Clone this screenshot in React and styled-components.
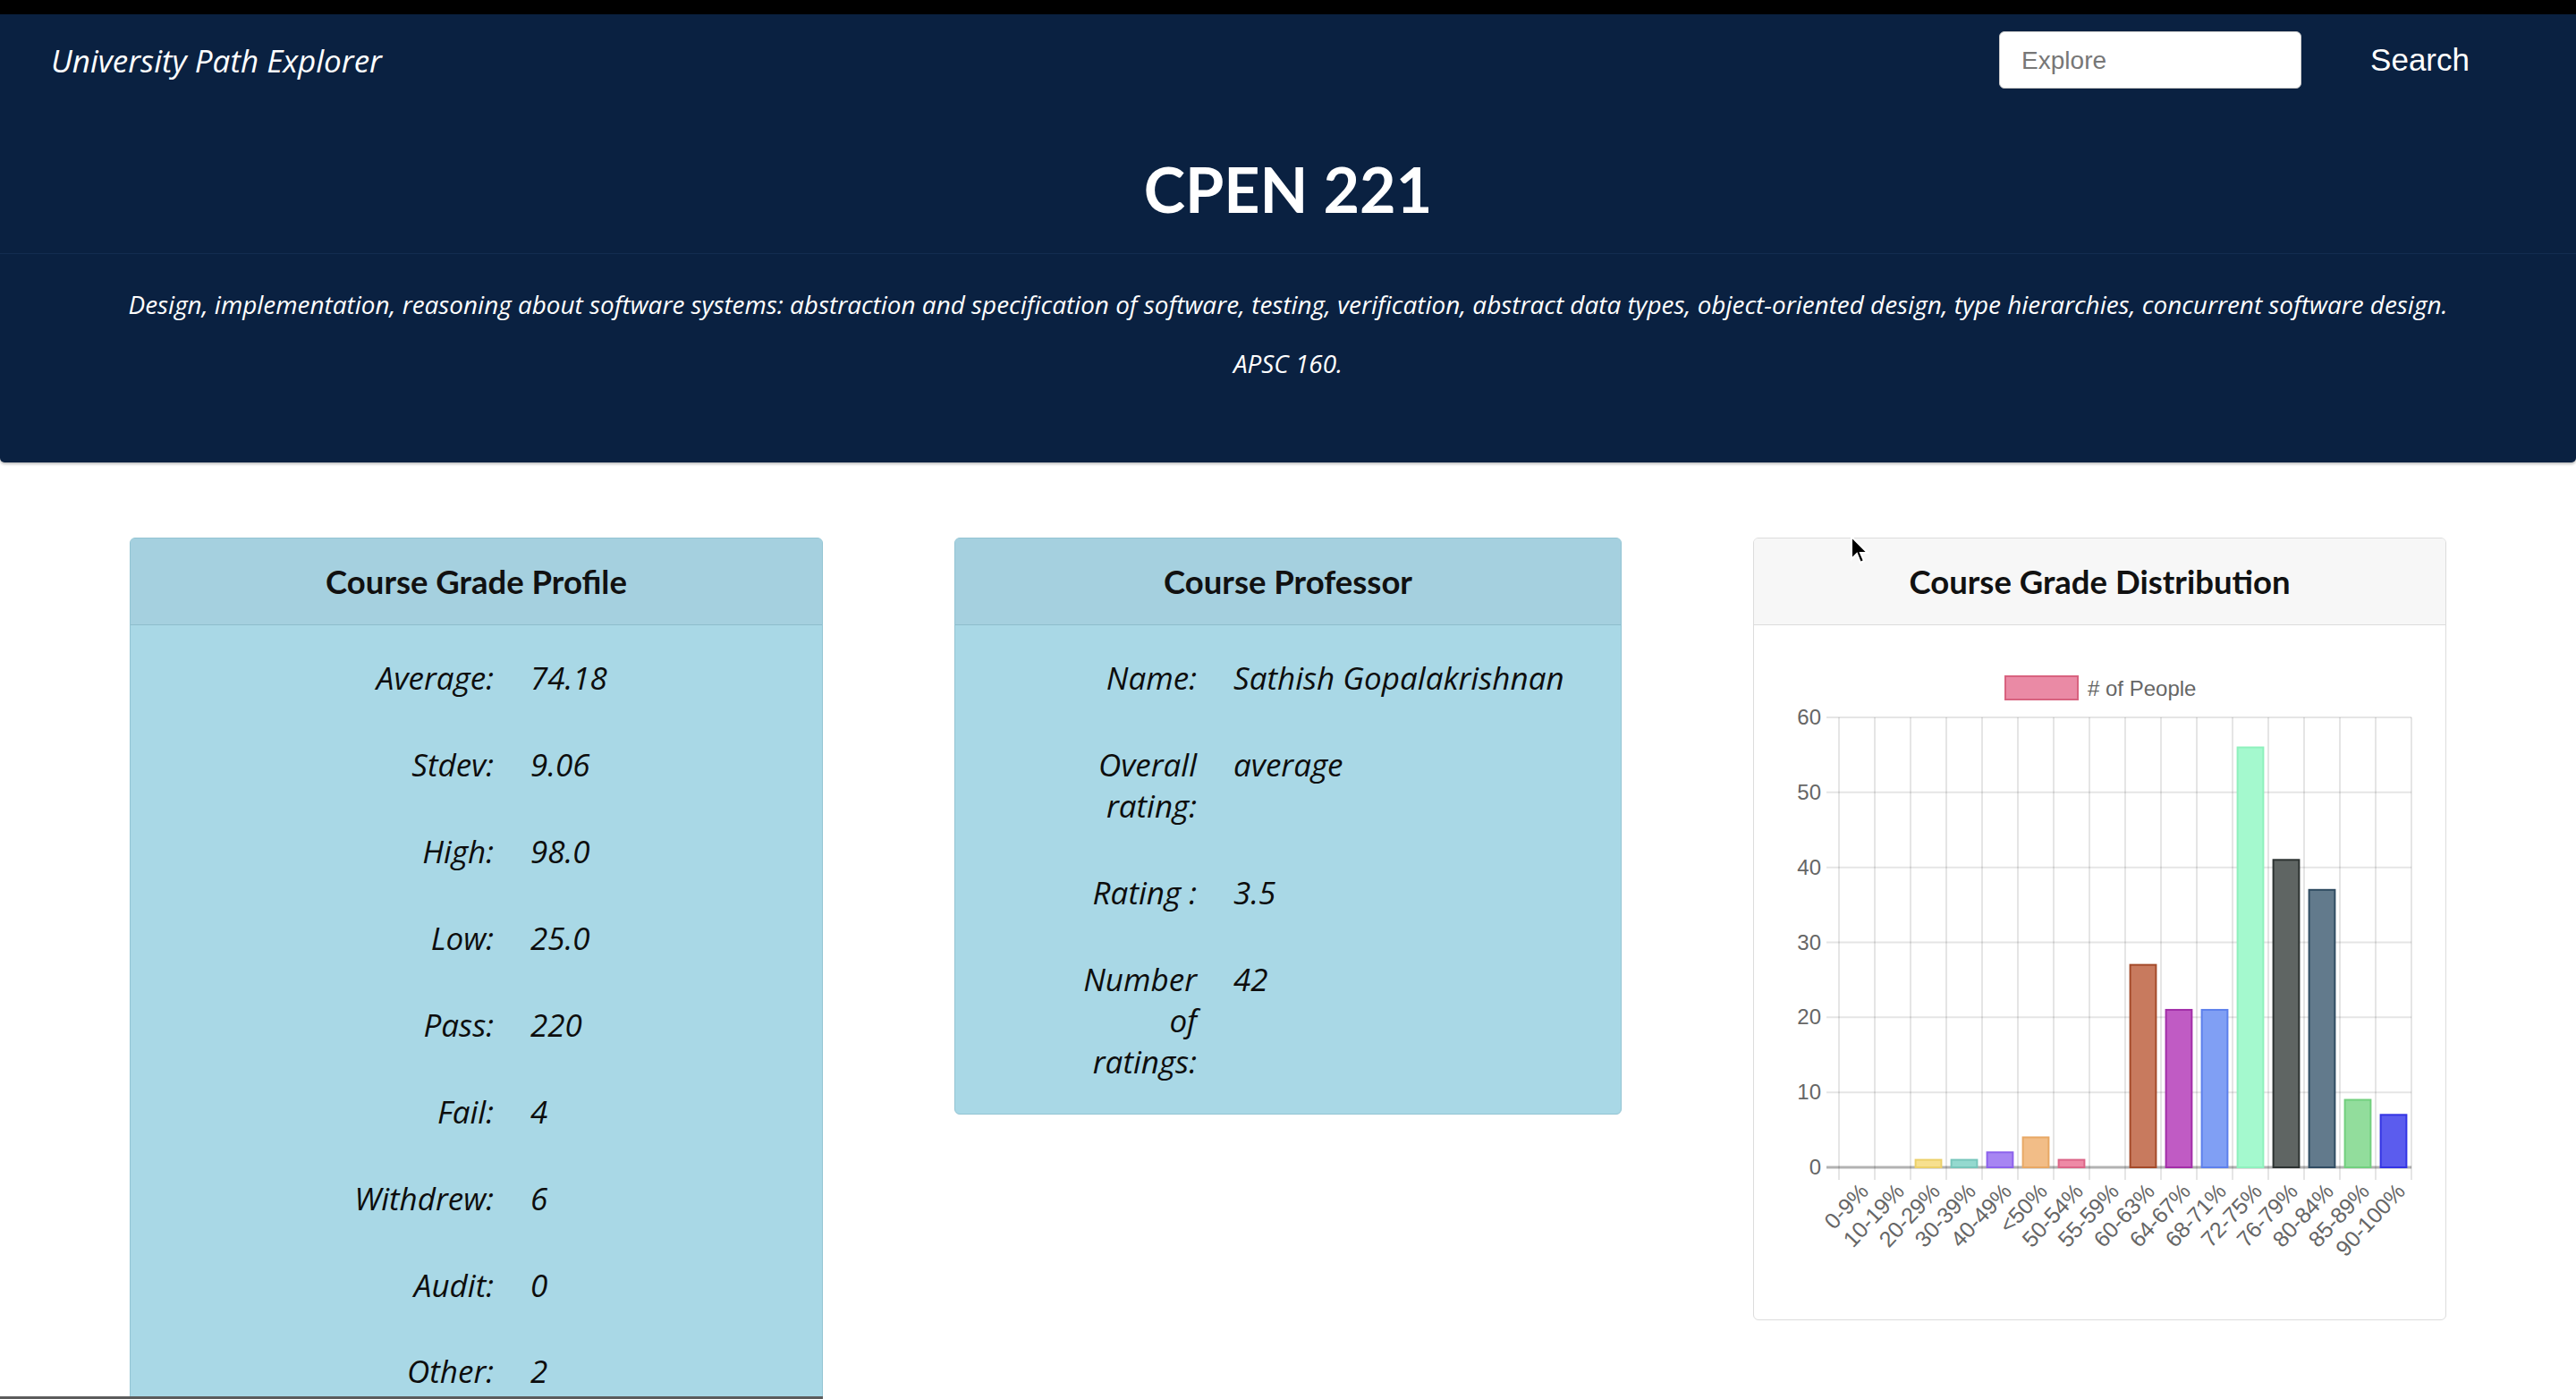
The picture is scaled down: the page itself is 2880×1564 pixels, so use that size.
import React from 'react'
import styled, { createGlobalStyle } from 'styled-components'

const GlobalStyle = createGlobalStyle`
  html, body {
    margin: 0;
    padding: 0;
    background: #fff;
  }
  body {
    font-family: "Open Sans", "Liberation Sans", sans-serif;
    overflow: hidden;
  }
  * { box-sizing: border-box; }
`

const profile = [
  ['Average:', '74.18'],
  ['Stdev:', '9.06'],
  ['High:', '98.0'],
  ['Low:', '25.0'],
  ['Pass:', '220'],
  ['Fail:', '4'],
  ['Withdrew:', '6'],
  ['Audit:', '0'],
  ['Other:', '2'],
]

const professor = [
  ['Name:', 'Sathish Gopalakrishnan'],
  ['Overall rating:', 'average'],
  ['Rating :', '3.5'],
  ['Number of ratings:', '42'],
]

const grades = [
  { label: '0-9%', value: 0, fill: '#f4a0b5', stroke: '#e07090' },
  { label: '10-19%', value: 0, fill: '#f4a0b5', stroke: '#e07090' },
  { label: '20-29%', value: 1, fill: '#f7e08f', stroke: '#ecd06a' },
  { label: '30-39%', value: 1, fill: '#94d9cf', stroke: '#78c6bb' },
  { label: '40-49%', value: 2, fill: '#a785f2', stroke: '#8c62ec' },
  { label: '<50%', value: 4, fill: '#f2bd87', stroke: '#e8a865' },
  { label: '50-54%', value: 1, fill: '#ee8aa6', stroke: '#dc6688' },
  { label: '55-59%', value: 0, fill: '#ccc', stroke: '#aaa' },
  { label: '60-63%', value: 27, fill: '#c87a5e', stroke: '#a44a2a' },
  { label: '64-67%', value: 21, fill: '#c05bc4', stroke: '#a22ea8' },
  { label: '68-71%', value: 21, fill: '#809ff4', stroke: '#5d80ec' },
  { label: '72-75%', value: 56, fill: '#a4f9ce', stroke: '#8ff1bd' },
  { label: '76-79%', value: 41, fill: '#5f6563', stroke: '#2c3231' },
  { label: '80-84%', value: 37, fill: '#627a8c', stroke: '#304c62' },
  { label: '85-89%', value: 9, fill: '#92dd9c', stroke: '#72cf7e' },
  { label: '90-100%', value: 7, fill: '#5b5cee', stroke: '#3334e4' },
]

const Page = styled.div`
  position: relative;
  min-height: 1564px;
`

const TopStrip = styled.div`
  height: 16px;
  background: #000;
`

const Hero = styled.header`
  background: #0a2141;
  color: #fff;
  border-radius: 0 0 5px 5px;
  box-shadow: 0 2px 3px rgba(0, 0, 0, 0.25);
`

const NavBar = styled.nav`
  height: 102px;
  display: flex;
  align-items: center;
  justify-content: space-between;
  padding: 0 119px 0 57px;
`

const Brand = styled.span`
  font-family: "Open Sans", sans-serif;
  font-style: italic;
  font-size: 35px;
  color: #fff;
`

const SearchForm = styled.form`
  display: flex;
  align-items: center;
  gap: 77px;
`

const SearchInput = styled.input`
  width: 338px;
  height: 64px;
  border: 1px solid #ccc;
  border-radius: 6px;
  padding: 2px 24px 0;
  font-family: "Liberation Sans", Arial, sans-serif;
  font-size: 28px;
  color: #333;
  background: #fff;
  outline: none;
  &::placeholder { color: #777; }
`

const SearchButton = styled.button`
  border: none;
  background: none;
  padding: 0;
  color: #fff;
  font-family: "Liberation Sans", Arial, sans-serif;
  font-size: 35px;
  cursor: pointer;
`

const TitleBlock = styled.div`
  padding: 50px 0 29px;
  border-bottom: 1px solid #132c50;
  text-align: center;
`

const CourseCode = styled.h1`
  margin: 0;
  font-family: Lato, "Open Sans", sans-serif;
  font-weight: 700;
  font-size: 70px;
  line-height: 86px;
`

const Description = styled.div`
  padding: 36px 40px 91px;
  text-align: center;
  font-style: italic;
  font-size: 27.9px;
  line-height: 40px;

  p {
    margin: 0;
  }
  p + p {
    margin-top: 26px;
  }
`

const CardRow = styled.main`
  display: grid;
  grid-template-columns: 775px 746px 775px;
  justify-content: space-between;
  align-items: start;
  padding: 84px 145px 0;
`

const Card = styled.section`
  border: 1px solid ${p => (p.$tone === 'blue' ? '#93c4d3' : '#dcdcdc')};
  border-radius: 6px;
  background: ${p => (p.$tone === 'blue' ? '#a9d8e6' : '#fff')};
  overflow: hidden;
`

const CardHeader = styled.h2`
  margin: 0;
  height: 97px;
  display: flex;
  align-items: center;
  justify-content: center;
  background: ${p => (p.$tone === 'blue' ? '#a5d0df' : '#f7f7f7')};
  border-bottom: 1px solid ${p => (p.$tone === 'blue' ? '#8dbdcc' : '#dcdcdc')};
  font-family: Lato, "Open Sans", sans-serif;
  font-weight: 700;
  font-size: 36.5px;
  color: #111;
`

const InfoGrid = styled.dl`
  margin: 0;
  display: grid;
  grid-template-columns: ${p => p.$labelWidth} 1fr;
  column-gap: 41px;
  padding: 11px 0 9px ${p => p.$inset};
  font-style: italic;
  font-size: 35px;
  line-height: 46px;
  color: #0d0d0d;
`

const Label = styled.dt`
  margin: 0;
  padding: 25.45px 0;
  text-align: right;
`

const Value = styled.dd`
  margin: 0;
  padding: 25.45px 0;
`

const ChartBody = styled.div`
  height: 776px;
`

const Cursor = styled.svg`
  position: absolute;
  left: 2068px;
  top: 598px;
`

const ScrollThumb = styled.div`
  position: fixed;
  left: 0;
  bottom: 0;
  width: 920px;
  height: 3px;
  background: #5c5c5c;
`

const InfoCard = ({ title, rows, labelWidth, inset }) => (
  <Card $tone="blue">
    <CardHeader $tone="blue">{title}</CardHeader>
    <InfoGrid $labelWidth={labelWidth} $inset={inset}>
      {rows.map(([k, v]) => (
        <React.Fragment key={k}>
          <Label>{k}</Label>
          <Value>{v}</Value>
        </React.Fragment>
      ))}
    </InfoGrid>
  </Card>
)

const GradeChart = () => {
  const left = 95
  const right = 735
  const top = 103
  const base = 606
  const unit = (base - top) / 60
  const cat = (right - left) / grades.length
  const barW = cat * 0.72
  const font = '"Liberation Sans", Arial, sans-serif'

  return (
    <svg width="773" height="776" viewBox="0 0 773 776">
      <rect x="281" y="57" width="81" height="26" fill="#ea8aa5" stroke="#d8627f" strokeWidth="2" />
      <text x="373" y="79" fontFamily={font} fontSize="24" fill="#666">
        # of People
      </text>

      {[0, 10, 20, 30, 40, 50, 60].map(v => {
        const y = base - v * unit
        return (
          <g key={v}>
            <line
              x1={left - 14}
              x2={right}
              y1={y}
              y2={y}
              stroke={v === 0 ? 'rgba(0,0,0,0.3)' : 'rgba(0,0,0,0.1)'}
              strokeWidth={v === 0 ? 3 : 2}
            />
            <text x={left - 20} y={y + 8} textAnchor="end" fontFamily={font} fontSize="24" fill="#666">
              {v}
            </text>
          </g>
        )
      })}

      {grades.map((g, i) => (
        <line
          key={'g' + i}
          x1={left + i * cat}
          x2={left + i * cat}
          y1={top}
          y2={base + 14}
          stroke="rgba(0,0,0,0.1)"
          strokeWidth="2"
        />
      ))}
      <line x1={right} x2={right} y1={top} y2={base + 14} stroke="rgba(0,0,0,0.1)" strokeWidth="2" />

      {grades.map((g, i) => {
        const h = g.value * unit
        const cx = left + i * cat + cat / 2
        return (
          <g key={g.label}>
            {g.value > 0 && (
              <rect
                x={cx - barW / 2}
                y={base - h}
                width={barW}
                height={h}
                fill={g.fill}
                stroke={g.stroke}
                strokeWidth="2"
              />
            )}
            <text
              transform={`translate(${cx + 8} ${base + 22}) rotate(-47)`}
              textAnchor="end"
              dy="0.35em"
              fontFamily={font}
              fontSize="25"
              fill="#666"
            >
              {g.label}
            </text>
          </g>
        )
      })}
    </svg>
  )
}

export default function App() {
  return (
    <Page>
      <GlobalStyle />
      <TopStrip />
      <Hero>
        <NavBar>
          <Brand>University Path Explorer</Brand>
          <SearchForm onSubmit={e => e.preventDefault()}>
            <SearchInput placeholder="Explore" />
            <SearchButton type="submit">Search</SearchButton>
          </SearchForm>
        </NavBar>
        <TitleBlock>
          <CourseCode>CPEN 221</CourseCode>
        </TitleBlock>
        <Description>
          <p>
            Design, implementation, reasoning about software systems: abstraction and specification of software,
            testing, verification, abstract data types, object-oriented design, type hierarchies, concurrent software
            design.
          </p>
          <p>APSC 160.</p>
        </Description>
      </Hero>

      <CardRow>
        <InfoCard title="Course Grade Profile" rows={profile} labelWidth="176px" inset="230px" />
        <InfoCard title="Course Professor" rows={professor} labelWidth="130px" inset="140px" />
        <Card>
          <CardHeader>Course Grade Distribution</CardHeader>
          <ChartBody>
            <GradeChart />
          </ChartBody>
        </Card>
      </CardRow>

      <Cursor width="22" height="34" viewBox="0 0 22 34">
        <path d="M2 2 L2 27 L8 21 L12 31 L16 29 L12 20 L20 20 Z" fill="#000" stroke="#fff" strokeWidth="2" />
      </Cursor>
      <ScrollThumb />
    </Page>
  )
}
